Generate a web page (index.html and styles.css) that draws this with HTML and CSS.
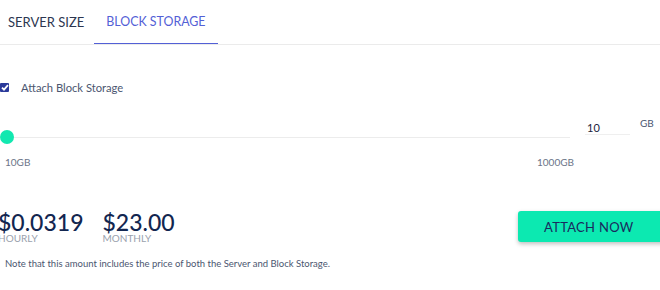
FILE: index.html
```html
<!DOCTYPE html>
<html lang="en">
    <head>
        <meta charset="UTF-8">
        <meta name="viewport" content="width=device-width, initial-scale=1.0">
        <title>Block Storage</title>
        <link rel="stylesheet" href="styles.css">
    </head>
    <body>
        <main class="panel">
            <nav class="tabs">
                <span class="tab">Server Size</span>
                <span class="tab tab_active">Block Storage</span>
            </nav>

            <label class="attach_row">
                <span class="check_box">
                    <svg width="8" height="7" viewBox="0 0 8 7"><path d="M1 3.6 L3 5.6 L7 1.2" fill="none" stroke="#fff" stroke-width="1.8"/></svg>
                </span>
                <span>Attach Block Storage</span>
            </label>

            <div class="size_row">
                <div class="slider">
                    <div class="track"></div>
                    <div class="thumb"></div>
                </div>
                <div class="size_input">10</div>
                <span class="unit">GB</span>
            </div>
            <div class="range_labels">
                <span>10GB</span>
                <span>1000GB</span>
            </div>

            <div class="price_row">
                <div class="price">
                    <div class="amount">$0.0319</div>
                    <div class="period">Hourly</div>
                </div>
                <div class="price">
                    <div class="amount">$23.00</div>
                    <div class="period">Monthly</div>
                </div>
                <button class="attach_button">Attach Now</button>
            </div>
            <p class="note">Note that this amount includes the price of both the Server and Block Storage.</p>
        </main>
    </body>
</html>
```

FILE: styles.css
```css
body {
    margin: 0;
    background: #fff;
    font-family: Lato, "Noto Sans", sans-serif;
    overflow: hidden;
}

.panel {
    width: 680px;
    margin-left: -2px;
}

.tabs {
    display: flex;
    border-bottom: 1px solid #ebebeb;
    height: 44px;
}

.tab {
    padding: 0 10px;
    line-height: 44px;
    font-size: 13px;
    text-transform: uppercase;
    color: #2c3650;
}

.tab_active {
    padding: 0 12px;
    font-size: 12.4px;
    color: #5360d6;
    border-bottom: 1px solid #5360d6;
}

.attach_row {
    display: flex;
    align-items: center;
    gap: 12px;
    margin-top: 36px;
    margin-left: 2px;
    font-size: 11.2px;
    color: #4b5670;
}

.check_box {
    width: 9px;
    height: 9px;
    background: #2b3a9a;
    border-radius: 1px;
    display: flex;
    align-items: center;
    justify-content: center;
}

.size_row {
    display: flex;
    align-items: center;
    margin-top: 33px;
    margin-left: 2px;
    height: 20px;
}

.slider {
    position: relative;
    width: 570px;
    height: 14px;
}

.track {
    position: absolute;
    left: 7px;
    right: 0;
    top: 7px;
    height: 1px;
    background: #ececec;
}

.thumb {
    position: absolute;
    left: 0;
    top: 0;
    width: 14px;
    height: 14px;
    border-radius: 50%;
    background: #12e8b0;
}

.size_input {
    width: 43px;
    margin-left: 15px;
    padding-left: 2px;
    border-bottom: 1px solid #efefef;
    font-size: 11px;
    color: #1c2440;
    position: relative;
    top: -9px;
}

.unit {
    margin-left: 10px;
    font-size: 10px;
    color: #4b5670;
    position: relative;
    top: -14px;
}

.range_labels {
    display: flex;
    justify-content: space-between;
    width: 569px;
    margin-top: 9px;
    margin-left: 7px;
    font-size: 10px;
    color: #6b7488;
}

.price_row {
    display: flex;
    align-items: flex-start;
    margin-top: 43px;
    gap: 19px;
}

.amount {
    font-size: 23px;
    font-weight: 500;
    color: #122650;
    line-height: 22px;
}

.period {
    font-size: 10px;
    text-transform: uppercase;
    color: #9aa1ad;
    line-height: 11px;
}

.attach_button {
    margin-left: auto;
    margin-top: 0;
    width: 160px;
    height: 31px;
    border: none;
    border-radius: 3px;
    background: #0ce9b1;
    box-shadow: 0 2px 4px rgba(0, 0, 0, 0.25);
    color: #1a2a5e;
    font-family: Lato, "Noto Sans", sans-serif;
    font-size: 13px;
    text-transform: uppercase;
    letter-spacing: 0.3px;
    text-align: left;
    padding-left: 26px;
}

.note {
    margin: 14px 0 0 7px;
    font-size: 9.5px;
    color: #4b5670;
}
```
